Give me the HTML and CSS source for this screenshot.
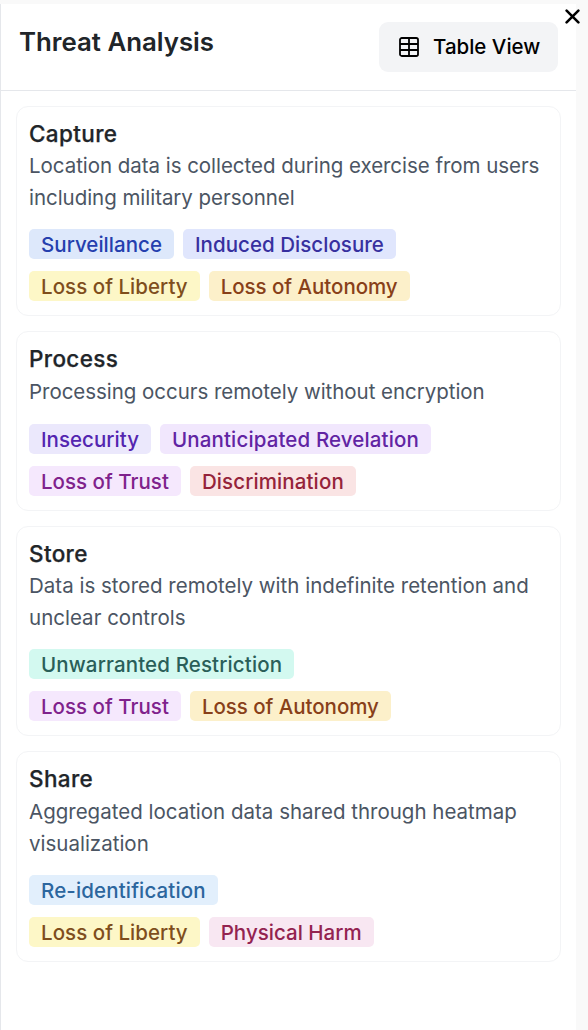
FILE: index.html
```html
<!DOCTYPE html>
<html lang="en">
<head>
<meta charset="utf-8">
<title>Threat Analysis</title>
<link rel="stylesheet" href="styles.css">
</head>
<body>
<main class="panel">
  <header class="header">
    <h1 class="title">Threat Analysis</h1>
    <button class="view-button" type="button">
      <svg class="grid-icon" viewBox="0 0 20 20"><rect x="1" y="1" width="18" height="18" rx="1.8"/><path d="M10 1v18M1 7h18M1 13h18"/></svg>
      <span>Table View</span>
    </button>
  </header>
  <div class="cards">
    <section class="card capture">
      <h2 class="card-title">Capture</h2>
      <p class="description">Location data is collected during exercise from users<br>including military personnel</p>
      <div class="tags">
        <div class="tag-row"><span class="tag blue">Surveillance</span><span class="tag indigo">Induced Disclosure</span></div>
        <div class="tag-row"><span class="tag yellow">Loss of Liberty</span><span class="tag amber">Loss of Autonomy</span></div>
      </div>
    </section>
    <section class="card process">
      <h2 class="card-title">Process</h2>
      <p class="description">Processing occurs remotely without encryption</p>
      <div class="tags">
        <div class="tag-row"><span class="tag violet">Insecurity</span><span class="tag purple">Unanticipated Revelation</span></div>
        <div class="tag-row"><span class="tag fuchsia">Loss of Trust</span><span class="tag red">Discrimination</span></div>
      </div>
    </section>
    <section class="card store">
      <h2 class="card-title">Store</h2>
      <p class="description">Data is stored remotely with indefinite retention and<br>unclear controls</p>
      <div class="tags">
        <div class="tag-row"><span class="tag teal">Unwarranted Restriction</span></div>
        <div class="tag-row"><span class="tag fuchsia">Loss of Trust</span><span class="tag amber">Loss of Autonomy</span></div>
      </div>
    </section>
    <section class="card share">
      <h2 class="card-title">Share</h2>
      <p class="description">Aggregated location data shared through heatmap<br>visualization</p>
      <div class="tags">
        <div class="tag-row"><span class="tag sky">Re-identification</span></div>
        <div class="tag-row"><span class="tag yellow">Loss of Liberty</span><span class="tag pink">Physical Harm</span></div>
      </div>
    </section>
  </div>
</main>
<svg class="close" viewBox="0 0 14 14"><path d="M1.5 1.5l11 11M12.5 1.5l-11 11"/></svg>
</body>
</html>
```
FILE: styles.css
```css
* { box-sizing: border-box; }
body {
  margin: 0;
  padding-top: 4px;
  height: 1030px;
  overflow: hidden;
  background: #f9f9f9;
  font-family: Inter, "Liberation Sans", sans-serif;
}
.panel {
  width: 576px;
  height: 1026px;
  background: #fff;
  border-left: 1px solid #e5e7eb;
}
.header {
  display: flex;
  justify-content: space-between;
  height: 87px;
  padding: 18px 18px 0 18px;
  border-bottom: 1px solid #e5e7eb;
}
.title {
  margin: 4px 0 0;
  font-size: 25.8px;
  font-weight: 600;
  line-height: 32px;
  color: #212529;
}
.view-button {
  display: flex;
  align-items: center;
  gap: 14px;
  width: 179px;
  height: 50px;
  padding: 0 0 0 20px;
  border: 0;
  border-radius: 9px;
  background: #f3f4f6;
  color: #000;
  font: 500 20.5px/32px Inter, "Liberation Sans", sans-serif;
  white-space: nowrap;
}
.grid-icon {
  width: 20px;
  height: 20px;
  fill: none;
  stroke: #000;
  stroke-width: 1.8;
}
.cards {
  display: flex;
  flex-direction: column;
  gap: 15px;
  padding: 15px 15px 0;
}
.card {
  padding: 11px 12px 14px;
  border: 1px solid #f3f4f6;
  border-radius: 12px;
}
.card-title {
  margin: 0;
  font-size: 22.5px;
  font-weight: 500;
  line-height: 32px;
  letter-spacing: 0.35px;
  color: #212529;
  -webkit-text-stroke: 0.25px #212529;
}
.description {
  margin: 0 0 15px;
  font-size: 20.5px;
  line-height: 32px;
  color: #4b5563;
  white-space: nowrap;
}
.capture .description { letter-spacing: -0.04px; }
.process .description { margin: 1px 0 16px; letter-spacing: -0.04px; }
.store .description { letter-spacing: 0.01px; }
.share .description { margin-top: 1px; }
.tags { display: flex; flex-direction: column; gap: 12px; }
.tag-row { display: flex; gap: 9px; }
.tag {
  height: 30px;
  padding: 0 12px;
  border-radius: 5px;
  font-size: 20.5px;
  font-weight: 500;
  line-height: 31px;
  white-space: nowrap;
}
.blue { background: #dde8fb; color: #253fae; letter-spacing: 0.03px; }
.indigo { background: #e0e6fd; color: #37309f; letter-spacing: 0.04px; }
.yellow { background: #fdf7c7; color: #7f4e1d; letter-spacing: 0.04px; }
.amber { background: #fcf0ca; color: #884019; letter-spacing: -0.04px; }
.violet { background: #ebe8fc; color: #5325b0; letter-spacing: 0.03px; }
.purple { background: #f1e7fd; color: #6124a3; letter-spacing: 0.13px; }
.fuchsia { background: #f5e8fd; color: #7f228c; letter-spacing: 0.02px; }
.red { background: #fae4e4; color: #95233a; letter-spacing: 0.11px; }
.teal { background: #d3f9f0; color: #2a5f59; letter-spacing: 0.13px; }
.sky { background: #e2effc; color: #2c669e; letter-spacing: 0.14px; }
.pink { background: #f8e7f2; color: #932350; letter-spacing: 0.02px; }
.close {
  position: absolute;
  left: 565px;
  top: 9px;
  width: 15px;
  height: 15px;
  fill: none;
  stroke: #000;
  stroke-width: 2.4;
  stroke-linecap: round;
}
```
